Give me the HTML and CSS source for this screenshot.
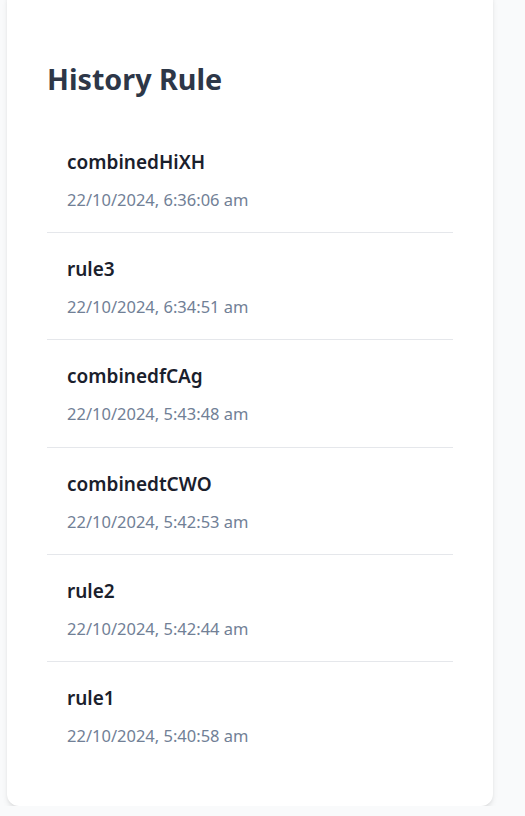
FILE: index.html
```html
<!DOCTYPE html>
<html>
<head>
<meta charset="utf-8">
<link rel="stylesheet" href="styles.css">
</head>
<body>
<div class="card">
  <h2 class="title">History Rule</h2>
  <ul class="list">
    <li class="item"><div class="name">combinedHiXH</div><div class="date">22/10/2024, 6:36:06 am</div></li>
    <li class="item"><div class="name">rule3</div><div class="date">22/10/2024, 6:34:51 am</div></li>
    <li class="item"><div class="name">combinedfCAg</div><div class="date">22/10/2024, 5:43:48 am</div></li>
    <li class="item"><div class="name">combinedtCWO</div><div class="date">22/10/2024, 5:42:53 am</div></li>
    <li class="item"><div class="name">rule2</div><div class="date">22/10/2024, 5:42:44 am</div></li>
    <li class="item"><div class="name">rule1</div><div class="date">22/10/2024, 5:40:58 am</div></li>
  </ul>
</div>
</body>
</html>
```

FILE: styles.css
```css
html, body {
  margin: 0;
  padding: 0;
  background: #f9fafb;
  font-family: "Noto Sans", "Open Sans", sans-serif;
}
body {
  padding: 0 32px 0 7px;
}
.card {
  margin-top: -12px;
  background: #ffffff;
  border-radius: 12px;
  box-shadow: 0 4px 6px -1px rgba(0,0,0,0.1), 0 2px 4px -2px rgba(0,0,0,0.1);
  padding: 72.75px 40px 38px;
  width: 406px;
}
.title {
  margin: 0 0 29px;
  font-size: 28.7px;
  line-height: 36px;
  font-weight: 700;
  color: #2d3748;
}
.list {
  list-style: none;
  margin: 0;
  padding: 0;
}
.item {
  padding: 22px 20px 20.25px;
  border-bottom: 1px solid #e5e7eb;
}
.item:last-child {
  border-bottom: none;
}
.name {
  font-size: 19px;
  line-height: 28px;
  font-weight: 600;
  color: #1a202c;
  margin-bottom: 12px;
}
.date {
  font-size: 16.5px;
  line-height: 24px;
  color: #718096;
}
```
